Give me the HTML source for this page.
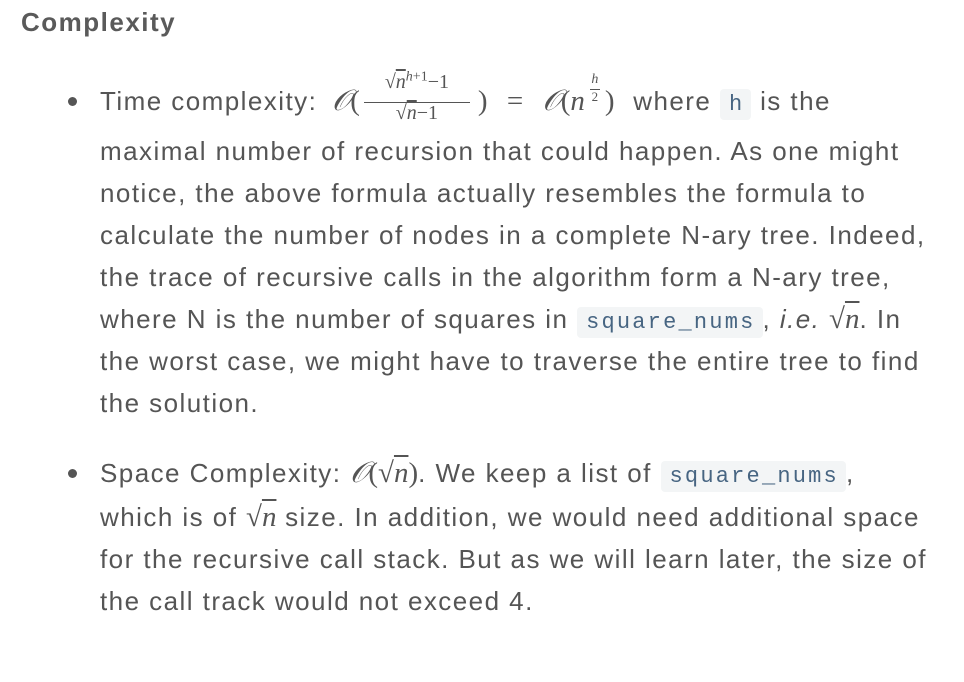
<!DOCTYPE html>
<html><head><meta charset="utf-8"><style>
body{margin:0;background:#fff;width:964px;height:682px;overflow:hidden;font-family:"Liberation Sans",sans-serif;color:#555;}
.h{position:absolute;left:21px;top:7px;font-size:26px;font-weight:bold;color:#5a5a5a;letter-spacing:1.5px}
.l{position:absolute;left:100px;font-size:26px;line-height:30px;height:30px;white-space:nowrap;letter-spacing:1.45px}
.dot{position:absolute;left:68px;width:9px;height:9px;border-radius:50%;background:#555}
code{font-family:"Liberation Mono",monospace;font-size:22px;letter-spacing:2.2px;color:#476582;background:#f3f5f6;border-radius:4px;padding:3px 7px 3px 9px;}
.m{font-family:"Liberation Serif",serif;font-style:italic;font-size:29px;letter-spacing:0}
.r{font-family:"Liberation Serif",serif;font-size:29px;letter-spacing:0}
.sq{text-decoration:overline;}
.box{display:inline-block;position:relative;vertical-align:baseline;height:10px;letter-spacing:0}
.box span{position:absolute;white-space:nowrap;font-family:"Liberation Serif",serif;left:0;right:0;text-align:center;line-height:20px}
</style></head><body>
<div class="h">Complexity</div>

<div class="dot" style="top:97px"></div>
<div class="l" style="top:86px">Time complexity: <span class="m" style="margin-left:6px">𝒪</span><span class="r">(</span><span class="box" style="width:114px"><span style="font-size:20px;top:-28px">√<i class="sq">n</i><sup style="font-size:14px;line-height:0"><i>h</i>+1</sup>−1</span><span style="top:2px;left:4px;right:4px;border-top:1px solid #555;height:0"></span><span style="font-size:20px;top:3px">√<i class="sq">n</i>−1</span></span><span class="r" style="margin-left:4px">)</span><span class="r" style="margin:0 12px"> = </span><span class="m">𝒪</span><span class="r">(</span><span class="m">n</span><span class="box" style="width:20px"><span style="font-size:14px;top:-27px;line-height:14px"><i>h</i></span><span style="top:-11px;left:5px;right:5px;border-top:1px solid #555;height:0"></span><span style="font-size:13px;top:-10px;line-height:14px">2</span></span><span class="r" style="margin-right:10px">)</span> where <code>h</code> is the</div>
<div class="l" style="top:136px">maximal number of recursion that could happen. As one might</div>
<div class="l" style="top:178px">notice, the above formula actually resembles the formula to</div>
<div class="l" style="top:220px">calculate the number of nodes in a complete N-ary tree. Indeed,</div>
<div class="l" style="top:262px">the trace of recursive calls in the algorithm form a N-ary tree,</div>
<div class="l" style="top:304px">where N is the number of squares in <code>square_nums</code>, <i>i.e.</i> <span class="r">√</span><span class="m sq">n</span>. In</div>
<div class="l" style="top:346px">the worst case, we might have to traverse the entire tree to find</div>
<div class="l" style="top:388px">the solution.</div>

<div class="dot" style="top:469px"></div>
<div class="l" style="top:458px">Space Complexity: <span class="m">𝒪</span><span class="r">(√</span><span class="m sq">n</span><span class="r">)</span>. We keep a list of <code>square_nums</code>,</div>
<div class="l" style="top:502px">which is of <span class="r">√</span><span class="m sq">n</span> size. In addition, we would need additional space</div>
<div class="l" style="top:544px">for the recursive call stack. But as we will learn later, the size of</div>
<div class="l" style="top:586px">the call track would not exceed 4.</div>
</body></html>
